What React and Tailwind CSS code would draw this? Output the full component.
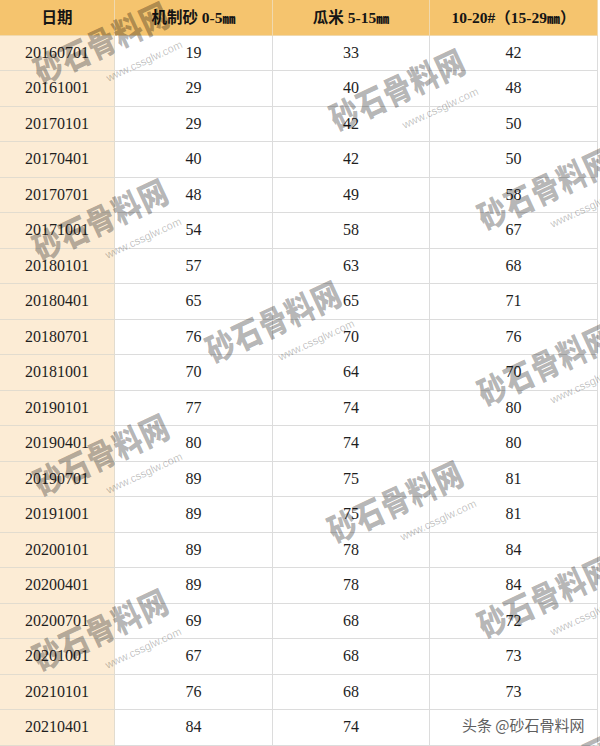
import React from "react";

const rows = [
  ["20160701", "19", "33", "42"],
  ["20161001", "29", "40", "48"],
  ["20170101", "29", "42", "50"],
  ["20170401", "40", "42", "50"],
  ["20170701", "48", "49", "58"],
  ["20171001", "54", "58", "67"],
  ["20180101", "57", "63", "68"],
  ["20180401", "65", "65", "71"],
  ["20180701", "76", "70", "76"],
  ["20181001", "70", "64", "70"],
  ["20190101", "77", "74", "80"],
  ["20190401", "80", "74", "80"],
  ["20190701", "89", "75", "81"],
  ["20191001", "89", "75", "81"],
  ["20200101", "89", "78", "84"],
  ["20200401", "89", "78", "84"],
  ["20200701", "69", "68", "72"],
  ["20201001", "67", "68", "73"],
  ["20210101", "76", "68", "73"],
  ["20210401", "84", "74", ""],
];

// centre of the first glyph of each watermark
const marks = [
  [48, 66], [344, 113], [492, 212], [47, 243], [220, 345],
  [492, 388], [48, 478], [342, 525], [492, 620], [47, 653], [492, 800],
];

function Watermark({ x, y }) {
  return (
    <div className="pointer-events-none absolute" style={{ left: x, top: y }}>
      <div className="relative origin-top-left -rotate-[25deg]">
        <div className="absolute left-[-14px] top-[-16px] origin-left scale-y-[1.18] whitespace-nowrap font-['Noto_Sans_CJK_SC',sans-serif] text-[28px] leading-[32px] font-black tracking-[1px] text-black/30">
          砂石骨料网
        </div>
        <div className="absolute left-[48px] top-[30px] whitespace-nowrap font-['Liberation_Sans',sans-serif] text-[11px] leading-[12px] text-black/25">
          www.cssglw.com
        </div>
      </div>
    </div>
  );
}

function Mm() {
  return <span className="font-['Noto_Sans_CJK_SC',sans-serif] text-[13px] font-black">㎜</span>;
}

const head = [
  <>日期</>,
  <>机制砂 0-5<Mm /></>,
  <>瓜米 5-15<Mm /></>,
  <>10-20#（15-29<Mm />）</>,
];

export default function App() {
  return (
    <div className="relative w-[600px] h-[746px] overflow-hidden bg-white font-['Liberation_Serif','Noto_Sans_CJK_SC',serif] text-[#1e1e1e]">
      <div className="grid grid-cols-[115px_158px_157px_168px]">
        {head.map((h, i) => (
          <div key={i} className="h-[35.5px] flex items-center justify-center bg-[#f5c46e] border-r border-b border-[#f0d9ae] text-[15.5px] font-bold text-[#151515] whitespace-nowrap">
            {h}
          </div>
        ))}
        {rows.map((r) => (
          <React.Fragment key={r[0]}>
            <div className="h-[35.5px] flex items-center justify-center bg-[#fcecd5] border-r border-b border-[#e2dccf] text-[16px]">
              {r[0]}
            </div>
            <div className="h-[35.5px] flex items-center justify-center border-r border-b border-[#dcdcdc] text-[16px]">
              {r[1]}
            </div>
            <div className="h-[35.5px] flex items-center justify-center border-r border-b border-[#dcdcdc] text-[16px]">
              {r[2]}
            </div>
            <div className="h-[35.5px] flex items-center justify-center border-r border-b border-[#dcdcdc] text-[16px]">
              {r[3]}
            </div>
          </React.Fragment>
        ))}
      </div>

      {marks.map(([x, y]) => (
        <Watermark key={`${x}-${y}`} x={x} y={y} />
      ))}

      {/* toutiao badge */}
      <div className="absolute left-[462px] top-[716px] whitespace-nowrap font-['Noto_Sans_CJK_SC',sans-serif] text-[15px] leading-[18px] text-[#5f5f5f] [text-shadow:0_0_2px_#fff,0_0_2px_#fff,0_0_3px_#fff]">
        头条 @砂石骨料网
      </div>
    </div>
  );
}
